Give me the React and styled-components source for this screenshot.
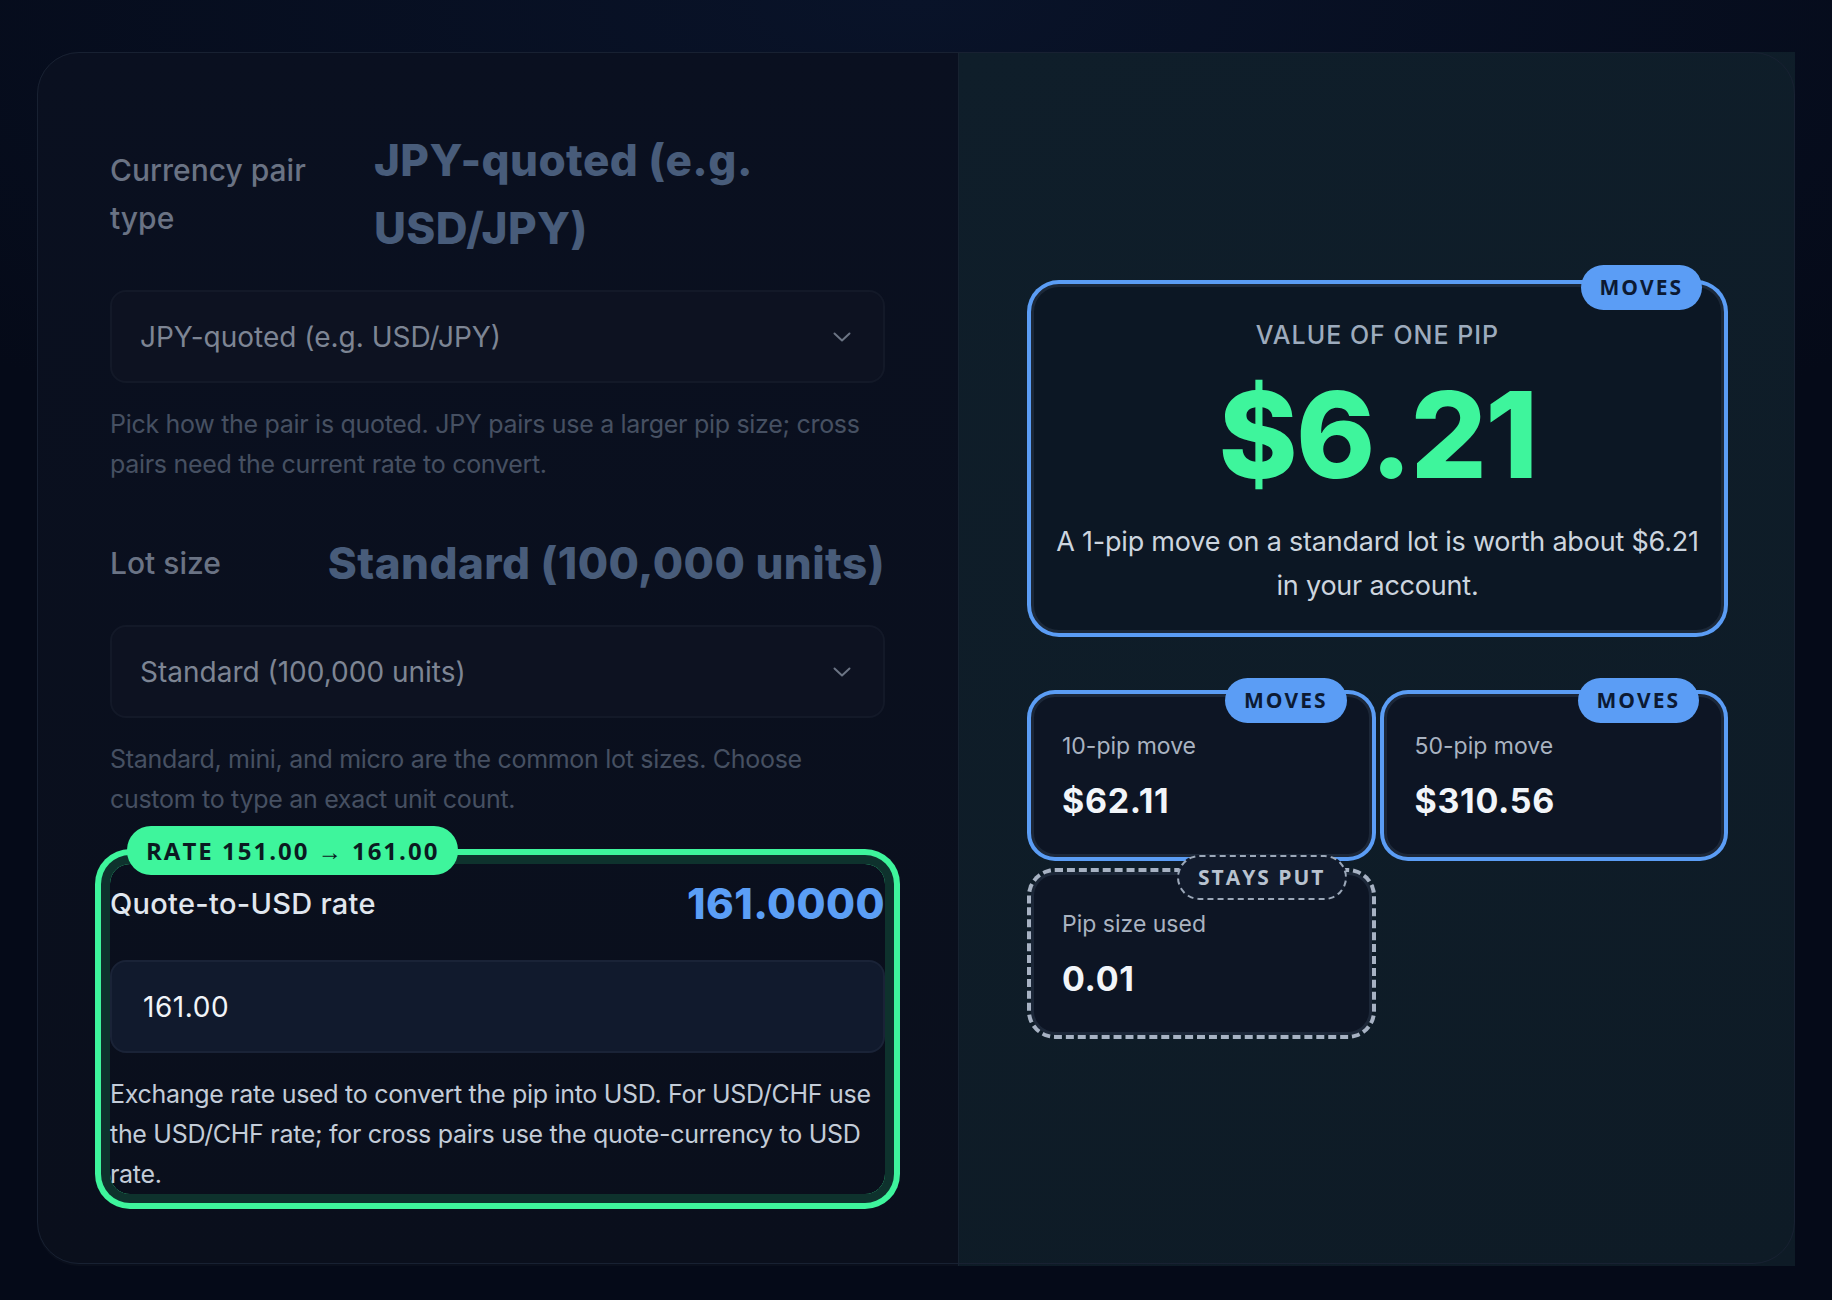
import React from 'react';
import styled, { createGlobalStyle, css } from 'styled-components';

const GlobalStyle = createGlobalStyle`
  * { box-sizing: border-box; }
  body {
    margin: 0;
    background: #050a18;
    font-family: Inter, "Noto Sans", sans-serif;
  }
`;

const Page = styled.div`
  width: 1832px;
  height: 1300px;
  padding: 52px 37px 36px;
  background: radial-gradient(ellipse 70% 40% at 50% 0%, #091329 0%, #050a18 100%);
`;

const Card = styled.div`
  position: relative;
  display: grid;
  grid-template-columns: 921px 1fr;
  height: 1212px;
  border-radius: 42px;
  background: #0a0f1d;

  &::after {
    content: '';
    position: absolute;
    inset: 0;
    border: 1px solid #182132;
    border-radius: 42px;
    pointer-events: none;
  }
`;

const LeftPanel = styled.div`
  display: flex;
  flex-direction: column;
  gap: 45px;
  padding: 74px 73px 72px;
  border-radius: 42px 0 0 42px;
  background: linear-gradient(180deg, #0a1020 0%, #0a0f1c 100%);
`;

const RightPanel = styled.div`
  display: flex;
  flex-direction: column;
  justify-content: center;
  gap: 61px;
  padding: 0 71px 0 72px;
  background: linear-gradient(160deg, #0f1e2a 0%, #0e1b26 100%);
  border-left: 1px solid #172230;
`;

const Field = styled.div`
  position: relative;
  display: flex;
  flex-direction: column;
  ${(p) =>
    p.$active &&
    css`
      border-radius: 20px;
      box-shadow: 0 0 0 9px #0e322d, 0 0 0 15px #3ef59c;
    `}
`;

const FieldHead = styled.div`
  display: flex;
  justify-content: space-between;
  align-items: center;
  gap: 36px;
  margin-bottom: ${(p) => (p.$active ? 16 : 28)}px;
`;

const FieldLabel = styled.div`
  flex: 0 1 auto;
  font-size: ${(p) => (p.$active ? 29 : 30)}px;
  line-height: ${(p) => (p.$active ? 80 : 48)}px;
  font-weight: 500;
  letter-spacing: ${(p) => (p.$active ? '0.01em' : '0')};
  color: ${(p) => (p.$active ? '#e1e7ef' : '#6a7384')};
`;

const FieldValue = styled.div`
  flex: 0 1 auto;
  font-size: ${(p) => (p.$active ? 42 : 44)}px;
  line-height: ${(p) => (p.$active ? 80 : 68)}px;
  font-weight: 800;
  letter-spacing: 0.01em;
  color: ${(p) => (p.$active ? '#5b9ef5' : '#485c7a')};
`;

const SelectBox = styled.div`
  display: flex;
  align-items: center;
  justify-content: space-between;
  height: 93px;
  padding: 0 32px 0 28px;
  border-radius: 16px;
  border: 2px solid #131928;
  background: #0d1221;
  font-size: 28px;
  color: #7d8594;
`;

const InputBox = styled.div`
  display: flex;
  align-items: center;
  height: 93px;
  padding: 0 31px;
  border-radius: 16px;
  border: 2px solid #1a2337;
  background: #111a2d;
  font-size: 28px;
  letter-spacing: 0.02em;
  color: #f1f4f8;
`;

const Help = styled.p`
  margin: 21px 0 0;
  font-size: 25px;
  line-height: 40px;
  letter-spacing: -0.012em;
  color: ${(p) => (p.$active ? '#c3ccd8' : '#465062')};
`;

const Badge = styled.span`
  position: absolute;
  top: ${(p) => p.$top}px;
  ${(p) => (p.$left !== undefined ? `left: ${p.$left}px;` : `right: ${p.$right}px;`)}
  display: inline-flex;
  align-items: center;
  height: ${(p) => (p.$tall ? 49 : 45)}px;
  padding: 0 19px;
  border-radius: 24px;
  font-family: "Open Sans", "Noto Sans", sans-serif;
  font-weight: 700;
  font-size: ${(p) => (p.$tall ? 24 : 21)}px;
  letter-spacing: 2px;
  white-space: nowrap;
  z-index: 2;
  ${(p) =>
    p.$kind === 'green' &&
    css`
      background: #3ef59c;
      color: #0b1a21;
    `}
  ${(p) =>
    p.$kind === 'blue' &&
    css`
      background: #5b9df5;
      color: #0c1a33;
    `}
  ${(p) =>
    p.$kind === 'still' &&
    css`
      background: #111a2b;
      color: #b8c2cf;
      border: 2px dashed #9ba7b8;
    `}
`;

const Hero = styled.div`
  position: relative;
  display: flex;
  flex-direction: column;
  align-items: center;
  padding: 30px 14px 22px;
  border: 3px solid #1c2838;
  border-radius: 28px;
  background: #0c1724;
  box-shadow: 0 0 0 4px #5b9df5;
  text-align: center;
`;

const HeroLabel = styled.div`
  font-size: 25px;
  line-height: 36px;
  font-weight: 500;
  letter-spacing: 0.04em;
  color: #9dabbd;
  text-transform: uppercase;
`;

const HeroValue = styled.div`
  margin-top: 16px;
  font-size: 120px;
  line-height: 132px;
  font-weight: 800;
  letter-spacing: -0.015em;
  color: #3ef59c;
`;

const HeroText = styled.div`
  margin-top: 19px;
  font-size: 27px;
  line-height: 44px;
  letter-spacing: -0.008em;
  color: #ccd5df;
`;

const StatGrid = styled.div`
  display: grid;
  grid-template-columns: 1fr 1fr;
  gap: 15px 12px;
`;

const Stat = styled.div`
  position: relative;
  display: flex;
  flex-direction: column;
  gap: 17px;
  height: 163px;
  padding: 33px 28px 0;
  border: 3px solid #1c2738;
  border-radius: 24px;
  background: #0d1524;
  ${(p) =>
    p.$still
      ? css`
          outline: 4px dashed #a7b2c3;
          outline-offset: 0;
        `
      : css`
          box-shadow: 0 0 0 4px #5b9df5;
        `}
`;

const StatLabel = styled.div`
  font-size: 23px;
  line-height: 32px;
  color: #a9b3c1;
`;

const StatValue = styled.div`
  font-size: 34px;
  line-height: 44px;
  font-weight: 700;
  letter-spacing: 0.02em;
  color: #f2f5f9;
`;

const Chevron = () => (
  <svg width="18" height="10" viewBox="0 0 18 10" fill="none">
    <path d="M1.5 1.5 9 8.5l7.5-7" stroke="#6b7484" strokeWidth="2" strokeLinecap="round" strokeLinejoin="round" />
  </svg>
);

const SelectField = ({ label, value, help }) => (
  <Field>
    <FieldHead>
      <FieldLabel>{label}</FieldLabel>
      <FieldValue>{value}</FieldValue>
    </FieldHead>
    <SelectBox>
      <span>{value}</span>
      <Chevron />
    </SelectBox>
    <Help>{help}</Help>
  </Field>
);

const stats = [
  { label: '10-pip move', value: '$62.11' },
  { label: '50-pip move', value: '$310.56' },
];

const App = () => (
  <>
    <GlobalStyle />
    <Page>
      <Card>
        <LeftPanel>
          <SelectField
            label="Currency pair type"
            value="JPY-quoted (e.g. USD/JPY)"
            help="Pick how the pair is quoted. JPY pairs use a larger pip size; cross pairs need the current rate to convert."
          />
          <SelectField
            label="Lot size"
            value="Standard (100,000 units)"
            help="Standard, mini, and micro are the common lot sizes. Choose custom to type an exact unit count."
          />
          <Field $active>
            <Badge $kind="green" $tall $top={-38} $left={17}>
              RATE 151.00 → 161.00
            </Badge>
            <FieldHead $active>
              <FieldLabel $active>Quote-to-USD rate</FieldLabel>
              <FieldValue $active>161.0000</FieldValue>
            </FieldHead>
            <InputBox>161.00</InputBox>
            <Help $active>
              Exchange rate used to convert the pip into USD. For USD/CHF use the USD/CHF rate; for cross pairs use
              the quote-currency to USD rate.
            </Help>
          </Field>
        </LeftPanel>

        <RightPanel>
          <Hero>
            <Badge $kind="blue" $top={-22} $right={19}>
              MOVES
            </Badge>
            <HeroLabel>Value of one pip</HeroLabel>
            <HeroValue>$6.21</HeroValue>
            <HeroText>A 1-pip move on a standard lot is worth about $6.21 in your account.</HeroText>
          </Hero>
          <StatGrid>
            {stats.map((s) => (
              <Stat key={s.label}>
                <Badge $kind="blue" $top={-19} $right={22}>
                  MOVES
                </Badge>
                <StatLabel>{s.label}</StatLabel>
                <StatValue>{s.value}</StatValue>
              </Stat>
            ))}
            <Stat $still>
              <Badge $kind="still" $top={-20} $right={22}>
                STAYS PUT
              </Badge>
              <StatLabel>Pip size used</StatLabel>
              <StatValue>0.01</StatValue>
            </Stat>
          </StatGrid>
        </RightPanel>
      </Card>
    </Page>
  </>
);

export default App;
